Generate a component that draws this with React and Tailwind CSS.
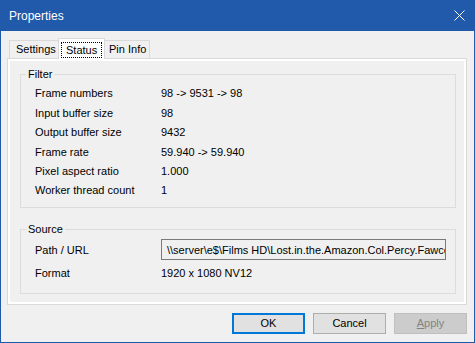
import React from 'react';

const FONT = { fontFamily: '"Liberation Sans", Arial, sans-serif' };

const filterRows = [
  ['Frame numbers', '98 -> 9531 -> 98'],
  ['Input buffer size', '98'],
  ['Output buffer size', '9432'],
  ['Frame rate', '59.940 -> 59.940'],
  ['Pixel aspect ratio', '1.000'],
  ['Worker thread count', '1'],
];

function Group({ title, className, children }) {
  return (
    <fieldset className={'border border-[#dcdcdc] mx-[10px] mr-[8px] ' + className}>
      <legend className="ml-[5px] px-[2px] leading-[14px]">{title}</legend>
      {children}
    </fieldset>
  );
}

export default function App() {
  return (
    <div style={FONT} className="w-[475px] h-[343px] bg-[#f0f0f0] border-x border-b border-[#2159ab] flex flex-col text-[11px] text-black">
      {/* Title bar */}
      <div className="h-[31px] shrink-0 bg-[#2159ab] flex items-center justify-between pl-[8px] pr-[8px] text-white text-[12px]">
        <span>Properties</span>
        <svg width="11" height="11" viewBox="0 0 11 11" className="mr-[1px]">
          <path d="M0.5 0.5 L10.5 10.5 M10.5 0.5 L0.5 10.5" stroke="white" strokeWidth="1" />
        </svg>
      </div>

      <div className="flex-1 flex flex-col pl-[6px] pr-[7px] pt-[7px]">
        {/* Tabs */}
        <div className="h-[20px] flex items-end pl-[2px] relative z-10">
          <div className="h-[18px] w-[49px] border-l border-t border-[#d9d9d9] flex items-center pl-[6px]">Settings</div>
          <div className="h-[21px] -mb-px w-[47px] border-x border-t border-[#d9d9d9] bg-white flex items-start pt-[3px] pl-[2px]">
            <span className="border border-dotted border-black px-[4px] h-[16px] leading-[14px] w-[41px]">Status</span>
          </div>
          <div className="h-[18px] w-[45px] border-r border-t border-[#d9d9d9] flex items-center pl-[4px]">Pin Info</div>
        </div>

        {/* Panel */}
        <div className="h-[247px] border border-[#d9d9d9]">
          <div className="h-full border-2 border-white pt-[6px]">
            <Group title="Filter" className="pb-[7px]">
              <div className="pt-[3px] pl-[14px]">
                {filterRows.map(([k, v]) => (
                  <div key={k} className="flex h-[19.4px] items-center">
                    <span className="w-[126px]">{k}</span>
                    <span>{v}</span>
                  </div>
                ))}
              </div>
            </Group>
            <Group title="Source" className="mt-[14px] pb-[10px]">
              <div className="pl-[14px] pt-[3px]">
                <div className="flex h-[21px] items-center">
                  <span className="w-[126px]">Path / URL</span>
                  <div className="w-[285px] h-[21px] border border-[#7a7a7a] bg-[#f0f0f0] pl-[5px] flex items-center overflow-hidden whitespace-nowrap">
                    \\server\e$\Films HD\Lost.in.the.Amazon.Col.Percy.Fawcett.2016.1080p.mkv
                  </div>
                </div>
                <div className="flex h-[19.4px] items-center mt-[3px]">
                  <span className="w-[126px]">Format</span>
                  <span>1920 x 1080 NV12</span>
                </div>
              </div>
            </Group>
          </div>
        </div>

        {/* Buttons */}
        <div className="flex justify-end gap-[8px] mt-[8px]">
          <button className="w-[73px] h-[21px] bg-[#e1e1e1] border-2 border-[#0078d7] flex items-center justify-center">OK</button>
          <button className="w-[73px] h-[21px] bg-[#e1e1e1] border border-[#adadad] flex items-center justify-center">Cancel</button>
          <button className="w-[73px] h-[21px] bg-[#cccccc] border border-[#bfbfbf] text-[#838383] flex items-center justify-center">
            <span><span className="underline">A</span>pply</span>
          </button>
        </div>
      </div>
    </div>
  );
}
